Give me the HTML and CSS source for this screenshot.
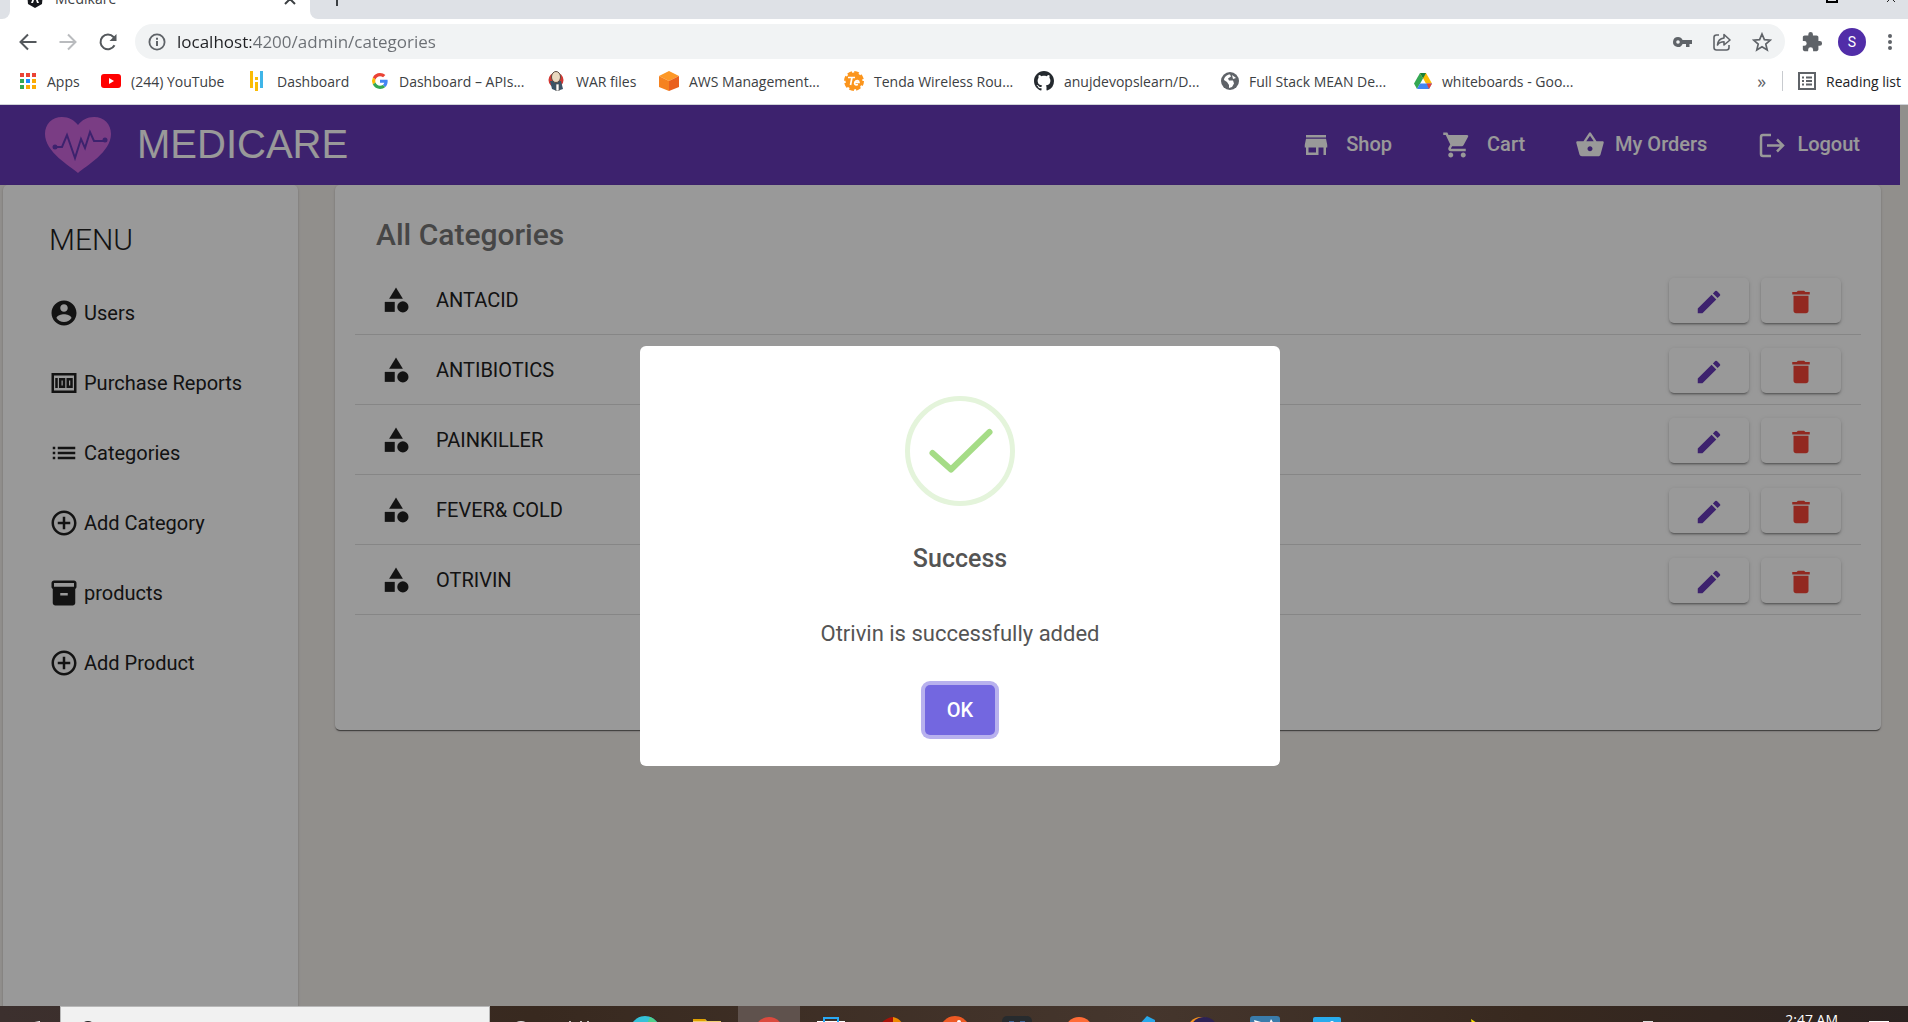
FILE: index.html
```html
<!DOCTYPE html>
<html lang="en">
<head>
<meta charset="utf-8">
<title>Medikare</title>
<link rel="stylesheet" href="styles.css">
</head>
<body>
<svg class="defs" aria-hidden="true">
  <symbol id="i-shapes" viewBox="0 0 24 24"><path d="M12 2l-5.5 9h11z"/><circle cx="17.5" cy="17.5" r="4.5"/><path d="M3 13.5h8v8H3z"/></symbol>
  <symbol id="i-edit" viewBox="0 0 24 24"><path d="M3 17.25V21h3.75L17.81 9.94l-3.75-3.75L3 17.25zM20.71 7.04a1 1 0 0 0 0-1.41l-2.34-2.34a1 1 0 0 0-1.41 0l-1.83 1.83 3.75 3.75 1.83-1.83z"/></symbol>
  <symbol id="i-delete" viewBox="0 0 24 24"><path d="M6 19c0 1.100.9 2 2 2h8c1.100 0 2-.9 2-2V7H6v12zM19 4h-3.500l-1-1h-5l-1 1H5v2h14V4z"/></symbol>
  <symbol id="i-add" viewBox="0 0 24 24"><path d="M13 7h-2v4H7v2h4v4h2v-4h4v-2h-4V7zm-1-5C6.480 2 2 6.480 2 12s4.480 10 10 10 10-4.480 10-10S17.520 2 12 2zm0 18c-4.410 0-8-3.590-8-8s3.590-8 8-8 8 3.590 8 8-3.590 8-8 8z"/></symbol>
</svg>

<div class="screen">
  <header class="browser">
    <div class="tabstrip">
      <div class="tab-before"></div>
      <div class="tab">
        <svg width="18" height="18" viewBox="0 0 18 18"><path d="M9 0l8 3-1 11-7 4-7-4L1 3z" fill="#15171c"/><path d="M9 3l4 10h-2l-1-3H8l-1 3H5z" fill="#fff"/></svg>
        <span class="tab-title">Medikare</span>
        <svg width="12" height="12" viewBox="0 0 12 12"><path d="M1 1l10 10M11 1L1 11" stroke="#3c4043" stroke-width="2"/></svg>
      </div>
      <div class="tab-after">
        <svg width="16" height="16" viewBox="0 0 16 16"><path d="M8 1v14M1 8h14" stroke="#3c4043" stroke-width="2"/></svg>
        <div class="window-controls">
          <svg width="12" height="12" viewBox="0 0 12 12"><path d="M1 0h10v9H1z" fill="none" stroke="#000" stroke-width="2"/></svg>
          <svg width="12" height="12" viewBox="0 0 12 12"><path d="M1 0l9 9M11 0L2 9" stroke="#222"/></svg>
        </div>
      </div>
    </div>

    <div class="toolbar">
      <button class="tool" aria-label="Back"><svg width="20" height="20" viewBox="0 0 20 20"><path d="M18.500 10H3M10 2.500L2.500 10l7.500 7.500" fill="none" stroke="#54585c" stroke-width="2"/></svg></button>
      <button class="tool" aria-label="Forward"><svg width="20" height="20" viewBox="0 0 20 20"><path d="M1.500 10H17M10 2.500l7.500 7.500-7.500 7.500" fill="none" stroke="#b9bbbe" stroke-width="2"/></svg></button>
      <button class="tool" aria-label="Reload"><svg width="20" height="20" viewBox="0 0 20 20"><path d="M16.500 13.300A7.400 7.400 0 1 1 15.500 5l1.500 2" fill="none" stroke="#54585c" stroke-width="2"/><path d="M18.500 2v7h-7z" fill="#54585c"/></svg></button>
      <div class="omnibox">
        <svg width="18" height="18" viewBox="0 0 18 18"><circle cx="9" cy="9" r="7.600" fill="none" stroke="#5f6368" stroke-width="1.800"/><path d="M9 8v5M9 4.800v2" stroke="#5f6368" stroke-width="2"/></svg>
        <input class="url" type="text" aria-label="Address" value="localhost:4200/admin/categories">
        <button class="tool" aria-label="Passwords"><svg width="20" height="20" viewBox="0 0 20 20"><path d="M6 5a5 5 0 1 0 4.600 7H14v3h3.500v-3H20V8h-9.400A5 5 0 0 0 6 5zm0 3.200a1.800 1.800 0 1 1 0 3.600 1.800 1.800 0 0 1 0-3.600z" fill="#5f6368"/></svg></button>
        <button class="tool" aria-label="Share"><svg width="20" height="20" viewBox="0 0 20 20"><path d="M7 3H4.500A2.500 2.500 0 0 0 2 5.500v10A2.500 2.500 0 0 0 4.500 18h10a2.500 2.500 0 0 0 2.500-2.500V13M12 2.500L18 8l-6 5v-3.200c-3 0-5 .8-6.500 3.200.3-4 2.500-6.500 6.500-7z" fill="none" stroke="#5f6368" stroke-width="1.600" stroke-linejoin="round"/></svg></button>
        <button class="tool" aria-label="Bookmark this page"><svg width="20" height="20" viewBox="0 0 20 20"><path d="M10 2l2.400 5.600 6 .5-4.600 4 1.400 5.900-5.200-3.200L4.800 18l1.400-5.900-4.600-4 6-.5z" fill="none" stroke="#5f6368" stroke-width="1.700"/></svg></button>
      </div>
      <button class="tool" aria-label="Extensions"><svg width="22" height="22" viewBox="0 0 24 24"><path d="M20.500 11H19V7c0-1.100-.9-2-2-2h-4V3.500a2.500 2.500 0 0 0-5 0V5H4c-1.100 0-2 .9-2 2v3.800h1.500a2.700 2.700 0 0 1 0 5.400H2V20c0 1.100.9 2 2 2h3.800v-1.500a2.700 2.700 0 0 1 5.400 0V22H17c1.100 0 2-.9 2-2v-4h1.500a2.500 2.500 0 0 0 0-5z" fill="#5f6368"/></svg></button>
      <button class="tool" aria-label="Profile"><span class="avatar">S</span></button>
      <button class="tool tool-menu" aria-label="Menu"><svg width="6" height="18" viewBox="0 0 6 18" fill="#5f6368"><circle cx="3" cy="3" r="2"/><circle cx="3" cy="9" r="2"/><circle cx="3" cy="15" r="2"/></svg></button>
    </div>

    <nav class="bookmarks" aria-label="Bookmarks">
      <div class="bookmark-list">
        <a class="bookmark" href="#"><svg width="18" height="18" viewBox="0 0 18 18"><path d="M1 1h4v4H1zM7 1h4v4H7zM13 1h4v4h-4z" fill="#ea4335"/><path d="M1 7h4v4H1zM1 13h4v4H1z" fill="#34a853"/><path d="M7 7h4v4H7z" fill="#1a8cff"/><path d="M13 7h4v4h-4zM7 13h4v4H7zM13 13h4v4h-4z" fill="#fbab05"/></svg>Apps</a>
        <a class="bookmark" href="#"><svg width="20" height="20" viewBox="0 0 20 20"><rect y="3" width="20" height="14" rx="3" fill="#f00"/><path d="M8 7l5 3-5 3z" fill="#fff"/></svg>(244) YouTube</a>
        <a class="bookmark" href="#"><svg width="18" height="20" viewBox="0 0 18 20"><path d="M1 0h3v17H1zM6 6h3v3H6zM6 11h3v9H6z" fill="#fbbc05"/><path d="M11 0h3v17h-3z" fill="#3fb5e8"/></svg>Dashboard</a>
        <a class="bookmark" href="#"><svg width="18" height="16" viewBox="0 0 48 48"><path fill="#EA4335" d="M24 9.500c3.540 0 6.710 1.220 9.210 3.600l6.850-6.850C35.900 2.380 30.470 0 24 0 14.620 0 6.510 5.380 2.560 13.220l7.980 6.190C12.430 13.720 17.740 9.500 24 9.500z"/><path fill="#4285F4" d="M46.980 24.550c0-1.570-.15-3.090-.38-4.550H24v9.020h12.940c-.58 2.960-2.260 5.480-4.780 7.180l7.730 6c4.510-4.180 7.090-10.360 7.090-17.650z"/><path fill="#FBBC05" d="M10.530 28.590a14.500 14.500 0 0 1 0-9.180l-7.980-6.190a24 24 0 0 0 0 21.560z"/><path fill="#34A853" d="M24 48c6.480 0 11.930-2.130 15.890-5.810l-7.730-6c-2.150 1.450-4.920 2.300-8.160 2.300-6.260 0-11.570-4.220-13.470-9.910l-7.980 6.190C6.510 42.620 14.620 48 24 48z"/></svg>Dashboard – APIs...</a>
        <a class="bookmark" href="#"><svg width="18" height="20" viewBox="0 0 18 20"><circle cx="8" cy="9" r="7.500" fill="#d33833"/><path d="M2 10h11l2 8-6 2-5-2z" fill="#3b5468"/><ellipse cx="8" cy="6" rx="4.500" ry="5.500" fill="#ead9c0" stroke="#5b4a40"/><path d="M8 13h3v7H8z" fill="#fff" stroke="#555" stroke-width=".7"/></svg>WAR files</a>
        <a class="bookmark" href="#"><svg width="20" height="20" viewBox="0 0 20 20"><path d="M10 0l10 5-10 5L0 5z" fill="#fd9827"/><path d="M0 5l10 5v10L0 16z" fill="#f58220"/><path d="M20 5l-10 5v10l10-4z" fill="#e9601f"/></svg>AWS Management...</a>
        <a class="bookmark" href="#"><svg width="20" height="20" viewBox="0 0 20 20"><circle cx="10" cy="10" r="8.500" fill="#fb951d"/><circle cx="10" cy="10" r="8.500" fill="none" stroke="#fb951d" stroke-width="3" stroke-dasharray="4.500 2.176"/><path d="M4 6.500h7M8 6.500L6.500 14M11 11.500h4c0-2.500-3-2.500-4-.5s0 3.500 3 2.500" fill="none" stroke="#fff" stroke-width="1.700"/></svg>Tenda Wireless Rou...</a>
        <a class="bookmark" href="#"><svg width="20" height="20" viewBox="0 0 16 16"><path fill="#24292e" d="M8 0C3.580 0 0 3.580 0 8c0 3.540 2.290 6.530 5.470 7.590.4.070.55-.17.55-.38 0-.19-.01-.82-.01-1.490-2.010.37-2.530-.49-2.690-.94-.09-.23-.48-.94-.82-1.130-.28-.15-.68-.52-.01-.53.63-.01 1.080.58 1.230.82.72 1.210 1.870.87 2.330.66.07-.52.28-.87.51-1.070-1.780-.2-3.640-.89-3.640-3.950 0-.87.31-1.590.82-2.150-.08-.2-.36-1.020.08-2.120 0 0 .67-.21 2.200.82.640-.18 1.320-.27 2-.27s1.360.09 2 .27c1.530-1.040 2.200-.82 2.200-.82.440 1.100.16 1.920.08 2.120.51.56.82 1.270.82 2.150 0 3.070-1.870 3.750-3.650 3.950.29.25.54.73.54 1.480 0 1.070-.01 1.930-.01 2.200 0 .21.15.46.55.38A8.010 8.010 0 0 0 16 8c0-4.420-3.580-8-8-8z"/></svg>anujdevopslearn/D...</a>
        <a class="bookmark" href="#"><svg width="18" height="18" viewBox="0 0 18 18"><circle cx="9" cy="9" r="9" fill="#5f6368"/><path d="M3 8c0-3 3-5.500 6-5.500l1 2-3 2 1 2h4l1 3-2 3.500-3 1v-3L6 10z" fill="#fff"/><path d="M11 3l4 3-3 1z" fill="#fff"/></svg>Full Stack MEAN De...</a>
        <a class="bookmark" href="#"><svg width="18" height="18" viewBox="0 0 18 18"><path d="M6 1L0 11.500 3 17l6-10.500z" fill="#34a853"/><path d="M6 1h6l6 10.500h-6z" fill="#fbbc05"/><path d="M6 11.500h12L15 17H3z" fill="#4285f4"/><path d="M6 1h6L9 6.500z" fill="#188038"/><path d="M12.500 11.500H18L15 17z" fill="#ea4335"/></svg>whiteboards - Goo...</a>
      </div>
      <button class="more" aria-label="More bookmarks">»</button>
      <a class="reading-list" href="#"><svg width="18" height="18" viewBox="0 0 18 18"><path d="M1 1h16v16H1z" fill="none" stroke="#5f6368" stroke-width="2"/><path d="M4 5.500h2M8 5.500h6M4 9h2M8 9h6M4 12.500h2M8 12.500h6" stroke="#5f6368" stroke-width="2"/></svg>Reading list</a>
    </nav>
  </header>

  <main class="page">
    <div class="topbar">
      <svg width="66" height="56" viewBox="0 0 66 56"><path d="M33 56C25 49 0 35 0 17 0 7 7 0 17 0c7 0 12 3 16 8 4-5 9-8 16-8 10 0 17 7 17 17 0 18-25 32-33 39z" fill="#cc66dd"/><path d="M10 30h7l5-12 8 23 6-19 4 9 5-16 4 9h10" fill="none" stroke="#673ab7" stroke-width="2"/><circle cx="10" cy="30" r="2.500" fill="#673ab7"/><circle cx="60" cy="23" r="2.500" fill="#673ab7"/></svg>
      <span class="brand">MEDICARE</span>
      <nav class="topnav" aria-label="Store">
        <a class="toplink wide" href="#"><svg width="30" height="30" viewBox="0 0 24 24"><path d="M20 4H4v2h16V4zm1 10v-2l-1-5H4l-1 5v2h1v6h10v-6h4v6h2v-6h1zm-9 4H6v-4h6v4z"/></svg><span>Shop</span></a>
        <a class="toplink wide" href="#"><svg width="30" height="30" viewBox="0 0 24 24"><path d="M7 18c-1.100 0-1.990.9-1.990 2S5.900 22 7 22s2-.9 2-2-.9-2-2-2zM1 2v2h2l3.600 7.590-1.350 2.450c-.16.28-.25.61-.25.96 0 1.100.9 2 2 2h12v-2H7.420a.25.25 0 0 1-.25-.25l.03-.12.900-1.630h7.450c.75 0 1.410-.41 1.750-1.030l3.580-6.490A1 1 0 0 0 20 4H5.210l-.94-2H1zm16 16c-1.100 0-1.990.9-1.990 2s.89 2 1.990 2 2-.9 2-2-.9-2-2-2z"/></svg><span>Cart</span></a>
        <a class="toplink" href="#"><svg width="30" height="30" viewBox="0 0 24 24"><path d="M17.210 9l-4.380-6.560a1 1 0 0 0-1.660 0L6.790 9H2c-.55 0-1 .45-1 1 0 .09.010.18.040.27l2.540 9.270A2 2 0 0 0 5.500 21h13c.92 0 1.690-.62 1.930-1.460l2.540-9.270L23 10c0-.55-.45-1-1-1h-4.790zM9 9l3-4.400L15 9H9zm3 8c-1.100 0-2-.9-2-2s.9-2 2-2 2 .9 2 2-.9 2-2 2z"/></svg><span>My Orders</span></a>
        <a class="toplink" href="#"><svg width="30" height="30" viewBox="0 0 30 30"><path d="M14 5H6a2 2 0 0 0-2 2v17a2 2 0 0 0 2 2h8M10 15.500h16M20 9.500l6 6-6 6" fill="none" stroke="#fff" stroke-width="2.500"/></svg><span>Logout</span></a>
      </nav>
    </div>

    <div class="columns">
      <aside class="sidebar">
        <h2 class="menu-title">MENU</h2>
        <ul class="menu">
          <li><a class="menu-item" href="#"><svg width="30" height="30" viewBox="0 0 24 24"><path d="M12 2C6.480 2 2 6.480 2 12s4.480 10 10 10 10-4.480 10-10S17.520 2 12 2zm0 3c1.660 0 3 1.340 3 3s-1.340 3-3 3-3-1.340-3-3 1.340-3 3-3zm0 14.200a7.200 7.200 0 0 1-6-3.220c.03-1.990 4-3.080 6-3.080 1.990 0 5.970 1.090 6 3.080a7.200 7.200 0 0 1-6 3.220z"/></svg>Users</a></li>
          <li><a class="menu-item" href="#"><svg width="30" height="30" viewBox="0 0 24 24"><path fill-rule="evenodd" d="M2 4h20v16H2zM4 6v12h16V6zM5 8h2v8H5zM8 8h5v8H8zM10 10v4h1v-4zM14 8h5v8h-5zM16 10v4h1v-4z"/></svg>Purchase Reports</a></li>
          <li><a class="menu-item" href="#"><svg width="30" height="30" viewBox="0 0 24 24"><path d="M3 13h2v-2H3v2zm0 4h2v-2H3v2zm0-8h2V7H3v2zm4 4h14v-2H7v2zm0 4h14v-2H7v2zM7 7v2h14V7H7z"/></svg>Categories</a></li>
          <li><a class="menu-item" href="#"><svg width="30" height="30"><use href="#i-add"/></svg>Add Category</a></li>
          <li><a class="menu-item" href="#"><svg width="30" height="30" viewBox="0 0 24 24"><path fill-rule="evenodd" d="M20 2H4c-1 0-2 .9-2 2v3.010c0 .72.43 1.340 1 1.690V20c0 1.100 1.100 2 2 2h14c.9 0 2-.9 2-2V8.700c.57-.35 1-.97 1-1.690V4c0-1.100-1-2-2-2zm-5 12H9v-2h6v2zM4 4v3h16V4z"/></svg>products</a></li>
          <li><a class="menu-item" href="#"><svg width="30" height="30"><use href="#i-add"/></svg>Add Product</a></li>
        </ul>
      </aside>

      <section class="card">
        <h1 class="card-title">All Categories</h1>
        <ul class="rows">
          <li class="row"><svg width="30" height="30"><use href="#i-shapes"/></svg><span class="row-name">ANTACID</span><button class="action edit" aria-label="Edit ANTACID"><svg width="30" height="30"><use href="#i-edit"/></svg></button><button class="action delete" aria-label="Delete ANTACID"><svg width="30" height="30"><use href="#i-delete"/></svg></button></li>
          <li class="row"><svg width="30" height="30"><use href="#i-shapes"/></svg><span class="row-name">ANTIBIOTICS</span><button class="action edit" aria-label="Edit ANTIBIOTICS"><svg width="30" height="30"><use href="#i-edit"/></svg></button><button class="action delete" aria-label="Delete ANTIBIOTICS"><svg width="30" height="30"><use href="#i-delete"/></svg></button></li>
          <li class="row"><svg width="30" height="30"><use href="#i-shapes"/></svg><span class="row-name">PAINKILLER</span><button class="action edit" aria-label="Edit PAINKILLER"><svg width="30" height="30"><use href="#i-edit"/></svg></button><button class="action delete" aria-label="Delete PAINKILLER"><svg width="30" height="30"><use href="#i-delete"/></svg></button></li>
          <li class="row"><svg width="30" height="30"><use href="#i-shapes"/></svg><span class="row-name">FEVER&amp; COLD</span><button class="action edit" aria-label="Edit FEVER&amp; COLD"><svg width="30" height="30"><use href="#i-edit"/></svg></button><button class="action delete" aria-label="Delete FEVER&amp; COLD"><svg width="30" height="30"><use href="#i-delete"/></svg></button></li>
          <li class="row"><svg width="30" height="30"><use href="#i-shapes"/></svg><span class="row-name">OTRIVIN</span><button class="action edit" aria-label="Edit OTRIVIN"><svg width="30" height="30"><use href="#i-edit"/></svg></button><button class="action delete" aria-label="Delete OTRIVIN"><svg width="30" height="30"><use href="#i-delete"/></svg></button></li>
        </ul>
      </section>
    </div>

    <div class="backdrop">
      <div class="dialog" role="dialog" aria-modal="true" aria-labelledby="dialog-title">
        <svg width="110" height="110" viewBox="0 0 110 110" fill="none"><circle cx="55" cy="55" r="52.500" stroke="#e4f4db" stroke-width="5"/><path d="M27.500 57L46 73.500 84.500 36" stroke="#a5dc86" stroke-width="6" stroke-linecap="round" stroke-linejoin="round"/></svg>
        <h2 class="dialog-title" id="dialog-title">Success</h2>
        <p class="dialog-text">Otrivin is successfully added</p>
        <button class="ok">OK</button>
      </div>
    </div>
  </main>

  <footer class="taskbar">
    <button class="start" aria-label="Start"><svg width="20" height="20" viewBox="0 0 20 20"><path d="M0 3l8-1v7H0zM9 2l11-2v9H9zM0 10h8v7l-8-1zM9 10h11v10L9 18z" fill="#fff"/></svg></button>
    <div class="search"><svg width="20" height="20" viewBox="0 0 20 20"><circle cx="11" cy="8" r="7" fill="none" stroke="#222" stroke-width="2"/></svg></div>
    <div class="tiles">
      <span class="tile"><svg width="20" height="20" viewBox="0 0 20 20"><circle cx="10" cy="10" r="9" fill="none" stroke="#ddd" stroke-width="2"/></svg></span>
      <span class="tile"><svg width="28" height="20" viewBox="0 0 28 20"><path d="M1 0v4h11V0M19 0v20M1 7h11v10H1z" fill="none" stroke="#fff" stroke-width="1.500"/></svg></span>
      <span class="tile"><svg width="30" height="30" viewBox="0 0 30 30"><circle cx="15" cy="15" r="15" fill="#35c1d8"/><path d="M20 1a15 15 0 0 1 10 14H14z" fill="#4fd08a"/></svg></span>
      <span class="tile"><svg width="28" height="24" viewBox="0 0 28 24"><path d="M0 0h12l2 2h14v22H0z" fill="#f0cf72"/><path d="M0 0h12l1 2H0z" fill="#e0a100"/></svg></span>
      <span class="tile active"><svg width="28" height="28" viewBox="0 0 28 28"><circle cx="14" cy="14" r="14" fill="#db4a3e"/></svg></span>
      <span class="tile"><svg width="28" height="28" viewBox="0 0 28 28"><path d="M0 4h28v24H0z" fill="#fff"/><path d="M7 8V1h14v7" fill="none" stroke="#29a9f5" stroke-width="2"/></svg></span>
      <span class="tile"><svg width="28" height="28" viewBox="0 0 28 28"><path d="M14 0v14H0C0 6 6 1 14 0z" fill="#a81208"/><path d="M14 0c5 1 9 4 10 9H14z" fill="#ee8a00"/></svg></span>
      <span class="tile"><svg width="30" height="30" viewBox="0 0 30 30"><circle cx="15" cy="15" r="15" fill="#ee5a24"/><circle cx="19" cy="6" r="2" fill="#fff"/></svg></span>
      <span class="tile"><svg width="30" height="30" viewBox="0 0 30 30"><rect width="30" height="30" rx="5" fill="#272b2e"/><path d="M7 6h5M18 6h5" stroke="#3f6598" stroke-width="2"/></svg></span>
      <span class="tile"><svg width="28" height="28" viewBox="0 0 28 28"><circle cx="14" cy="14" r="14" fill="#ff6c37"/></svg></span>
      <span class="tile"><svg width="30" height="30" viewBox="0 0 30 30"><path d="M21 0l8 4v22l-8 4L9 13z" fill="#28a8ea"/></svg></span>
      <span class="tile"><svg width="30" height="30" viewBox="0 0 30 30"><circle cx="13" cy="15" r="14" fill="#f7941e"/><circle cx="16" cy="15" r="14" fill="#2c2255"/></svg></span>
      <span class="tile"><svg width="30" height="30" viewBox="0 0 30 30"><rect width="30" height="30" rx="3" fill="#3a7cab"/><path d="M4 4l7 2-5 5zM21 3l3 5h-5z" fill="#fff"/></svg></span>
      <span class="tile"><svg width="28" height="28" viewBox="0 0 28 28"><rect width="28" height="28" rx="2" fill="#29abec"/><circle cx="19" cy="6" r="2" fill="#fff"/></svg></span>
    </div>
    <div class="tray">
      <svg class="tray-bolt" width="8" height="24" viewBox="0 0 8 24"><path d="M1 0l6 4-4 8z" fill="#ffe600"/></svg>
      <svg width="10" height="20" viewBox="0 0 10 20"><path d="M0 0h10v4H0z" fill="#ddd"/></svg>
      <span class="clock">2:47 AM</span>
      <svg width="20" height="20" viewBox="0 0 20 20"><path d="M0 0h20v14H0z" fill="#fff"/></svg>
    </div>
  </footer>
</div>
</body>
</html>
```
FILE: styles.css
```css
* { box-sizing: border-box; }
body { margin: 0; font-family: Roboto, sans-serif; font-size: 20px; color: #212121; }
button { border: 0; padding: 0; background: none; font: inherit; }
a { color: inherit; text-decoration: none; }
ul { list-style: none; margin: 0; padding: 0; }
h1, h2, p { margin: 0; }
svg { flex: none; display: block; }
.defs { position: absolute; width: 0; height: 0; }

.screen { display: flex; flex-direction: column; height: 100vh; overflow: hidden; }

/* Browser chrome */
.browser { flex: none; background: #fff; border-bottom: 1px solid #d0d3d8; font-family: "Open Sans", sans-serif; font-size: 14px; color: #3c4043; }
.tabstrip { display: flex; align-items: flex-end; height: 19px; overflow: hidden; }
.tab-before { width: 10px; height: 41px; background: #dee1e6; border-radius: 0 0 8px 0; }
.tab { width: 300px; height: 41px; display: flex; align-items: center; gap: 11px; padding: 0 14px 0 16px; }
.tab-title { flex: 1; }
.tab-after { flex: 1; height: 41px; display: flex; align-items: center; justify-content: space-between; padding: 0 11px 0 19px; background: #dee1e6; border-radius: 0 0 0 8px; }
.window-controls { display: flex; gap: 47px; }

.toolbar { display: flex; align-items: center; height: 45px; padding-left: 8px; }
.tool { flex: none; width: 40px; height: 32px; display: flex; align-items: center; justify-content: center; }
.tool-menu { width: 36px; }
.omnibox { flex: 1; display: flex; align-items: center; height: 35px; margin: 0 7px; padding: 0 3px 0 13px; border-radius: 18px; background: #f1f3f4; }
.url { flex: 1; min-width: 0; margin-left: 11px; padding: 0; border: 0; outline: 0; font-family: "Open Sans", sans-serif; font-size: 17px; line-height: 24px; color: transparent; background: linear-gradient(to right, #202124 74px, #6a6e73 74px); -webkit-background-clip: text; background-clip: text; }
.avatar { width: 28px; height: 28px; border-radius: 50%; background: #512da8; color: #fff; font-family: Roboto, sans-serif; font-size: 14px; line-height: 28px; text-align: center; }

.bookmarks { display: flex; align-items: center; height: 40px; padding: 0 7px 6px 19px; }
.bookmark-list { flex: 1; display: grid; grid-template-columns: 82px 148px 122px 177px 111px 185px 190px 187px 193px auto; }
.bookmark { display: flex; align-items: center; gap: 10px; white-space: nowrap; }
.more { margin-right: 16px; font-size: 18px; color: #5f6368; }
.reading-list { display: flex; align-items: center; gap: 10px; height: 20px; padding-left: 15px; border-left: 1px solid #c8cbcf; color: #202124; }

/* Application page */
.page { flex: 1; min-height: 0; position: relative; display: flex; flex-direction: column; overflow: hidden; background: #f2eeea; }
.topbar { flex: none; display: flex; align-items: center; height: 80px; margin-right: 8px; padding: 0 40px 0 45px; background: #673ab7; color: #fff; }
.brand { margin-left: 26px; padding-bottom: 2px; font-family: "Liberation Sans", Arial, sans-serif; font-size: 40px; }
.topnav { margin-left: auto; display: flex; gap: 50px; font-weight: 500; }
.toplink { display: flex; align-items: center; gap: 10px; }
.toplink span { padding-bottom: 2px; }
.toplink.wide { gap: 15px; }
.toplink svg { fill: #fff; }

.columns { flex: 1; display: flex; align-items: flex-start; gap: 37px; padding: 0 27px 0 3px; }
.sidebar, .card { background: #fff; border-radius: 5px; box-shadow: 0 2px 1px -1px rgba(0, 0, 0, .4), 0 1px 1px rgba(0, 0, 0, .2), 0 1px 3px rgba(0, 0, 0, .15); }
.sidebar { align-self: stretch; width: 295px; padding: 20px 0 0 46px; margin-bottom: -20px; }
.sidebar svg, .row svg { fill: #212121; }
.menu-title { font-size: 30px; font-weight: 300; line-height: 70px; }
.menu { padding-top: 3px; }
.menu-item { display: flex; align-items: center; gap: 5px; height: 70px; }
.card { flex: 1; min-height: 545px; padding: 20px; }
.card-title { padding-left: 21px; font-size: 30px; font-weight: 500; line-height: 60px; color: #757575; }
.row { display: flex; align-items: center; height: 70px; padding: 1px 20px 0 26px; border-bottom: 1px solid #dfdfdf; }
.row-name { flex: 1; margin-left: 25px; }
.action { width: 80px; height: 45px; margin-left: 12px; display: flex; align-items: center; justify-content: center; padding-top: 3px; border-radius: 5px; background: #fff; box-shadow: 0 3px 1px -2px rgba(0, 0, 0, .2), 0 2px 2px rgba(0, 0, 0, .18), 0 1px 5px rgba(0, 0, 0, .12); }
.row .edit svg { fill: #673ab7; }
.row .delete svg { fill: #f44336; }

.backdrop { position: absolute; inset: 0; display: flex; align-items: center; justify-content: center; padding-left: 12px; background: rgba(0, 0, 0, .4); }
.dialog { width: 640px; display: flex; flex-direction: column; align-items: center; padding: 50px 20px 31px; border-radius: 6px; background: #fff; color: #545454; }
.dialog-title { margin-top: 33px; font-size: 25px; font-weight: 500; line-height: 40px; }
.dialog-text { margin-top: 38px; font-size: 22px; line-height: 34px; }
.ok { width: 70px; height: 50px; margin-top: 34px; border-radius: 5px; background: #7367e0; box-shadow: 0 0 0 4px #b8b1ee; color: #fff; font-weight: 500; font-size: 20px; }

/* Desktop taskbar */
.taskbar { flex: none; display: flex; align-items: flex-start; height: 16px; overflow: hidden; background: linear-gradient(to right, #3c302e, #38291f 28%, #45362d 60%, #38291f 80%, #2c2321); }
.start { width: 60px; height: 50px; display: flex; align-items: center; justify-content: center; }
.search { width: 430px; height: 50px; display: flex; align-items: center; padding-left: 16px; background: #f1f1f1; border: 1px solid #b8b8b8; }
.tiles { display: flex; }
.tile { width: 62px; height: 50px; display: flex; align-items: center; justify-content: center; }
.active { background: #5f524d; }
.tray { flex: 1; display: flex; align-items: center; height: 50px; padding-right: 19px; }
.tray-bolt { margin-left: 112px; margin-right: auto; }
.clock { align-self: flex-start; margin: 4px 31px 0 132px; font-family: "Open Sans", sans-serif; font-size: 14px; line-height: 20px; color: #fff; }
```
